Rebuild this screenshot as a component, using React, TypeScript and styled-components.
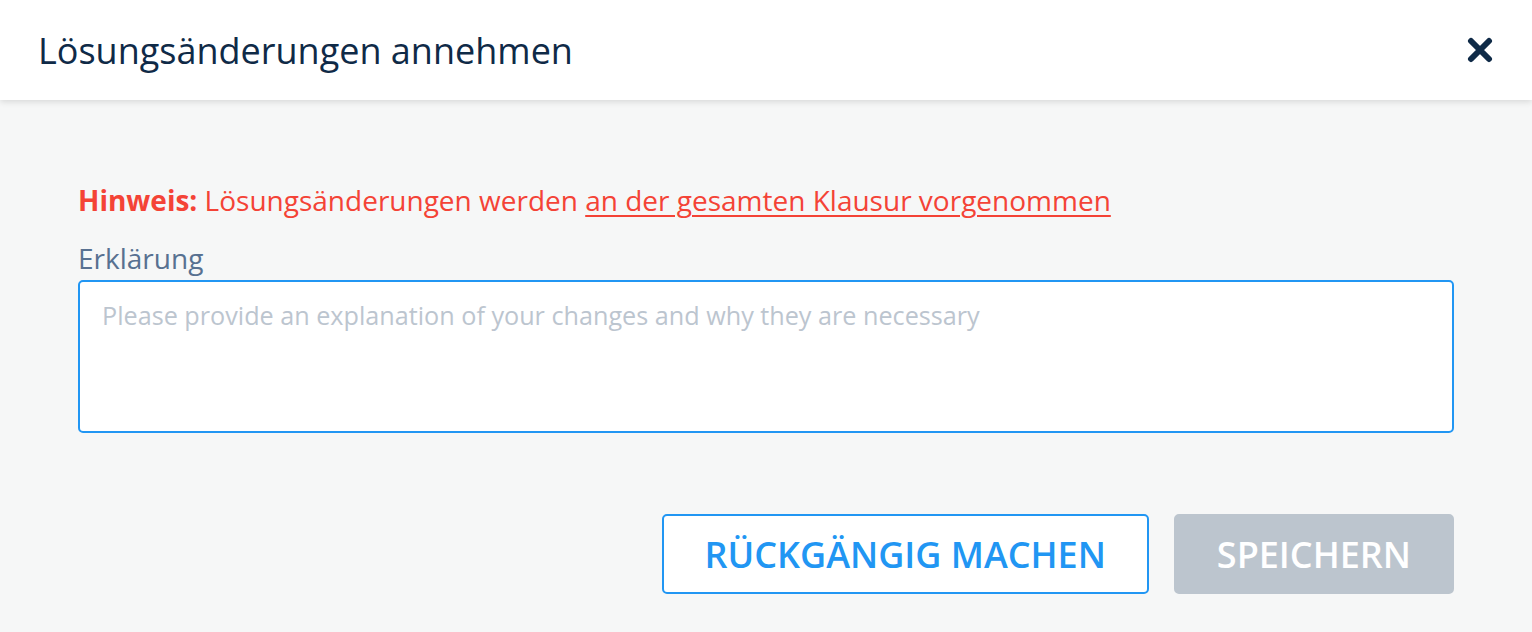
import React from 'react';
import styled, { createGlobalStyle } from 'styled-components';

const GlobalStyle = createGlobalStyle`
  html, body {
    margin: 0;
    padding: 0;
    background: #f6f7f7;
    font-family: 'Open Sans', 'Liberation Sans', sans-serif;
  }
`;

const Modal = styled.div`
  width: 1532px;
  height: 632px;
  background: #f6f7f7;
  display: flex;
  flex-direction: column;
`;

const Header = styled.div`
  height: 100px;
  background: #fff;
  box-shadow: 0 2px 6px rgba(0, 0, 0, 0.12);
  display: flex;
  align-items: center;
  justify-content: space-between;
  padding: 0 38px;
  position: relative;
  z-index: 1;
`;

const Title = styled.h1`
  margin: 0;
  font-size: 36px;
  font-weight: 400;
  color: #0f2a47;
`;

const CloseButton = styled.button`
  border: none;
  background: none;
  padding: 0;
  width: 28px;
  height: 28px;
  display: flex;
  align-items: center;
  justify-content: center;
  cursor: pointer;
`;

const Body = styled.div`
  flex: 1;
  padding: 80px 78px 0 78px;
  display: flex;
  flex-direction: column;
`;

const Notice = styled.p`
  margin: 0;
  font-size: 28px;
  line-height: 40px;
  color: #f44336;

  strong {
    font-weight: 700;
  }

  u {
    text-decoration: underline;
    text-underline-offset: 4px;
    text-decoration-thickness: 2px;
  }
`;

const Label = styled.label`
  margin-top: 18px;
  font-size: 28px;
  line-height: 40px;
  color: #587191;
`;

const TextArea = styled.textarea`
  margin-top: 2px;
  height: 153px;
  box-sizing: border-box;
  border: 2px solid #2196f3;
  border-radius: 5px;
  background: #fff;
  padding: 16px 22px;
  font-family: 'Open Sans', 'Liberation Sans', sans-serif;
  font-size: 25.2px;
  resize: none;
  outline: none;

  &::placeholder {
    color: #bcc5cf;
  }
`;

const Actions = styled.div`
  display: flex;
  justify-content: flex-end;
  gap: 25px;
  margin-top: 81px;
`;

const Button = styled.button<{ $variant: 'outline' | 'disabled' }>`
  height: 80px;
  box-sizing: border-box;
  border-radius: 5px;
  padding: 0 41px;
  font-family: 'Open Sans', 'Liberation Sans', sans-serif;
  font-size: 36px;
  font-weight: 600;
  text-transform: uppercase;
  border: 2px solid ${(p) => (p.$variant === 'outline' ? '#2196f3' : '#bcc5ce')};
  background: ${(p) => (p.$variant === 'outline' ? '#fff' : '#bcc5ce')};
  color: ${(p) => (p.$variant === 'outline' ? '#2196f3' : '#fff')};
`;

const App: React.FC = () => {
  return (
    <Modal>
      <GlobalStyle />
      <Header>
        <Title>Lösungsänderungen annehmen</Title>
        <CloseButton aria-label="close">
          <svg width="26" height="26" viewBox="0 0 26 26">
            <path
              d="M4 4 L22 22 M22 4 L4 22"
              stroke="#0f2a47"
              strokeWidth="6"
              strokeLinecap="round"
            />
          </svg>
        </CloseButton>
      </Header>
      <Body>
        <Notice>
          <strong>Hinweis:</strong> Lösungsänderungen werden <u>an der gesamten Klausur vorgenommen</u>
        </Notice>
        <Label>Erklärung</Label>
        <TextArea placeholder="Please provide an explanation of your changes and why they are necessary" />
        <Actions>
          <Button $variant="outline">Rückgängig machen</Button>
          <Button $variant="disabled">Speichern</Button>
        </Actions>
      </Body>
    </Modal>
  );
};

export default App;
